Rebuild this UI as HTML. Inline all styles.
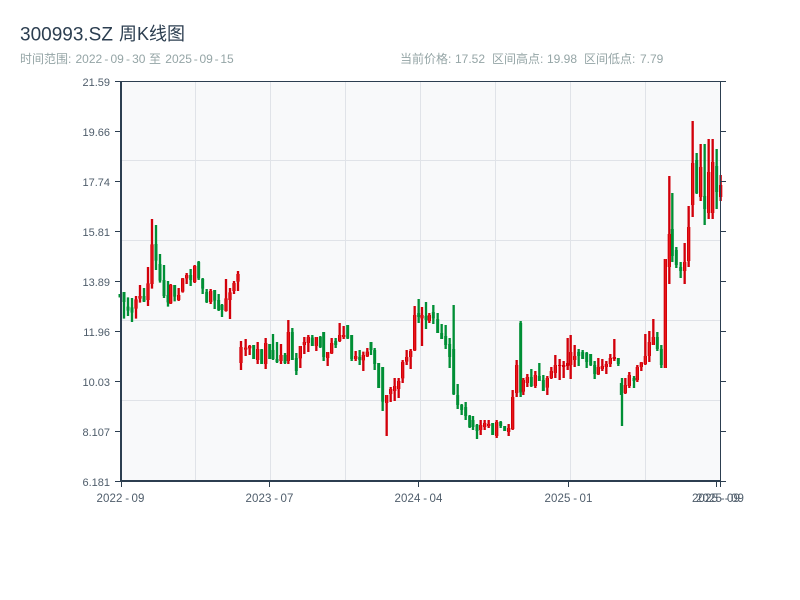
<!DOCTYPE html>
<html><head><meta charset="utf-8">
<style>
html,body{margin:0;padding:0;background:#fff;width:800px;height:600px;overflow:hidden}
svg{position:absolute;left:0;top:0}
text{font-family:"Liberation Sans","Noto Sans CJK SC",sans-serif}
.y{font-size:11px;fill:#4f5d6b;text-anchor:end}
.x{font-size:11.500px;fill:#4f5d6b}
.gw{fill:none;stroke:#008f35;stroke-width:7}
.gb{fill:none;stroke:#008f35;stroke-width:9}
.rw{fill:none;stroke:#d2000a;stroke-width:7}
.rb{fill:none;stroke:#d2000a;stroke-width:10}
.ri{fill:none;stroke:#ec1c1c;stroke-width:3}
</style></head><body>
<svg width="800" height="600" viewBox="0 0 800 600">
<g fill="#2c3e50"><text x="20" y="40.500" font-size="19">300993.SZ</text><text x="119" y="40" font-size="18">周K线图</text></g>
<g fill="#95a5a6" font-size="12">
<text x="20" y="63">时间范围:</text>
<text x="75.500 82.170 88.840 95.510 104.330 110.500 117.170 126 132.140 138.810" y="63">2022-09-30</text>
<text x="149" y="63">至</text>
<text x="165.300 171.970 178.640 185.310 193.700 199.480 206.150 214.600 220.320 226.990" y="63">2025-09-15</text>
<text x="400" y="63">当前价格:</text>
<text x="455" y="63">17.52</text>
<text x="492" y="63">区间高点:</text>
<text x="547" y="63">19.98</text>
<text x="584" y="63">区间低点:</text>
<text x="640" y="63">7.79</text>
</g>
<rect x="121" y="81" width="599" height="400" fill="#f8f9fa"/>
<path d="M195.500 81V481M270.500 81V481M345.500 81V481M420.500 81V481M495.500 81V481M570.500 81V481M645.500 81V481M121 160.500H720M121 240.500H720M121 320.500H720M121 400.500H720" fill="none" stroke="#e0e3e8" stroke-width="1"/>

<g transform="translate(110 210) scale(.33333)">
<path class="gw" d="M30 252V262M42 246V326M54 262V318M66 264V336M102 234V276M138 45V180M150 132V218M162 165V264M174 213V290M194 225V274M242 177V228M266 153V210M278 204V252M290 237V279M314 240V297M326 252V303M336 282V321"/>
<path class="gb" d="M30 252V262M42 246V276M54 290V302M66 292V308M102 258V275M138 102V152M150 162V212M162 210V258M174 255V277M194 225V260M242 195V210M266 156V205M278 207V236M290 246V276M314 240V272M326 270V300M336 285V300"/>
<path class="rw" d="M78 258V326M90 225V278M114 171V288M126 27V236M182 222V282M206 234V273M218 204V248M230 189V222M254 165V219M302 237V282M348 207V305M360 234V327M372 213V252M384 183V243"/>
<path class="rb" d="M78 268V296M90 258V266M114 220V270M126 103V222M182 225V280M206 255V270M218 205V245M230 195V205M254 168V216M302 243V276M348 265V303M360 247V270M372 219V243M384 192V215"/>
<path class="ri" d="M78 268V296M90 258V266M114 220V270M126 103V222M182 225V280M206 255V270M218 205V245M230 195V205M254 168V216M302 243V276M348 265V303M360 247V270M372 219V243M384 192V215"/>
</g>

<g transform="translate(235 315) scale(.33333)">
<path class="gw" d="M56 90V132M80 102V147M104 87V132M114 57V135M126 81V144M150 114V147M172 39V135M184 114V180M232 60V93M256 63V99M266 51V138M302 69V99M338 30V72M350 60V138M374 105V150"/>
<path class="gb" d="M56 90V132M80 103V147M104 87V132M114 105V132M126 132V141M150 120V144M172 51V135M184 129V168M232 68V93M256 66V96M266 51V126M302 78V90M338 30V70M350 60V132M374 126V135"/>
<path class="rw" d="M18 78V165M32 72V123M44 90V120M68 81V147M92 69V162M138 87V147M160 15V147M196 93V159M208 66V117M220 60V111M244 66V108M278 111V153M290 69V117M314 24V81M326 33V72M362 108V138"/>
<path class="rb" d="M18 96V144M32 98V104M44 93V100M68 102V135M92 84V147M138 120V138M160 51V138M196 93V130M208 81V90M220 66V84M244 66V93M278 111V129M290 84V115M314 60V78M326 60V66M362 123V132"/>
<path class="ri" d="M18 96V144M32 98V104M44 93V100M68 102V135M92 84V147M138 120V138M160 51V138M196 93V130M208 81V90M220 66V84M244 66V93M278 111V129M290 84V115M314 60V78M326 60V66M362 123V132"/>
</g>

<g transform="translate(360 295) scale(.33333)">
<path class="gw" d="M33 141V180M44 159V225M56 204V279M68 216V348M176 12V84M198 21V102M220 30V87M233 54V114M245 87V132M257 90V162M269 129V219M281 30V300M293 267V342M305 327V360M317 321V375M329 360V399M339 363V405M351 387V432"/>
<path class="gb" d="M33 141V165M44 165V207M56 204V279M68 216V320M176 54V66M198 63V75M220 51V70M233 72V114M245 114V132M257 123V150M269 147V186M281 162V297M293 300V330M305 330V345M317 336V363M329 363V396M339 375V396M351 390V408"/>
<path class="rw" d="M10 170V228M22 159V186M80 300V423M92 276V321M104 249V318M116 249V309M128 195V264M140 165V210M152 162V222M164 33V168M186 36V153M208 54V84"/>
<path class="rb" d="M10 180V196M22 170V184M80 300V324M92 282V297M104 273V288M116 258V282M128 201V250M140 186V200M152 168V186M164 60V166M186 60V70M208 60V78"/>
<path class="ri" d="M10 180V196M22 170V184M80 300V324M92 282V297M104 273V288M116 258V282M128 201V250M140 186V200M152 168V186M164 60V166M186 60V70M208 60V78"/>
</g>

<g transform="translate(470 315) scale(.33333)">
<path class="gw" d="M68 324V360M92 318V339M104 333V348M152 18V246M184 162V216M208 144V198M220 180V228M326 102V153M338 105V132M350 111V159M362 117V153M374 138V192M445 129V153"/>
<path class="gb" d="M68 324V360M92 321V333M104 333V348M152 24V232M184 186V213M208 183V198M220 195V228M326 111V123M338 111V132M350 114V141M362 117V150M374 150V177M445 129V147"/>
<path class="rw" d="M32 315V360M44 315V345M56 315V339M80 315V369M116 327V363M128 225V345M140 135V246M160 189V240M172 177V216M196 168V219M232 183V240M244 156V192M256 120V189M269 132V195M281 138V189M293 69V165M302 60V192M314 90V156M385 129V180M397 132V168M409 138V177M421 117V156M433 72V138"/>
<path class="rb" d="M32 330V345M44 324V336M56 327V333M80 321V363M116 339V351M128 246V342M140 150V234M160 195V230M172 186V204M196 180V213M232 189V218M244 168V189M256 150V174M269 150V153M281 150V156M293 144V153M302 111V150M314 123V135M385 156V178M397 153V162M409 147V156M421 129V147M433 126V132"/>
<path class="ri" d="M32 330V345M44 324V336M56 327V333M80 321V363M116 339V351M128 246V342M140 150V234M160 195V230M172 186V204M196 180V213M232 189V218M244 168V189M256 150V174M302 111V150M314 123V135M385 156V178M397 153V162M409 147V156M421 129V147"/>
</g>

<g transform="translate(610 240) scale(.33333)">
<path class="gw" d="M36 414V558M72 408V444M142 276V333M154 315V384"/>
<path class="gb" d="M34 429V465M72 414V423M142 291V327M154 327V375"/>
<path class="rw" d="M46 414V462M58 396V444M82 375V426M94 366V393M106 282V375M118 273V366M130 237V315M166 57V384"/>
<path class="rb" d="M46 435V459M58 405V438M82 381V420M94 367V381M106 348V372M118 306V348M130 291V315M166 57V384"/>
<path class="ri" d="M46 435V459M58 405V438M82 381V420M94 367V381M106 348V372M118 306V348M130 291V315M166 57V384"/>
</g>

<g transform="scale(.33333)">
<path class="gw" d="M2017 579V786M2029 741V804M2042 786V834M2090 459V582M2114 432V675M2150 447V627"/>
<path class="gb" d="M2017 687V768M2029 750V795M2042 801V813M2090 480V579M2114 588V627M2150 498V576"/>
<path class="rw" d="M2008 528V852M2054 729V852M2066 618V801M2078 363V651M2102 432V603M2126 417V657M2138 417V657M2162 525V603"/>
<path class="rb" d="M2008 702V801M2054 786V813M2066 681V783M2078 489V615M2102 501V591M2126 516V639M2138 486V639M2162 555V591"/>
<path class="ri" d="M2008 702V801M2054 786V813M2066 681V783M2078 489V615M2102 501V591M2126 516V639M2138 486V639M2162 555V591"/>
</g>

<path d="M121 81.500H720.500V481" fill="none" stroke="#2c3e50" stroke-width="1"/>
<path d="M121 81V482M120 481H721" fill="none" stroke="#2c3e50" stroke-width="2"/>
<path d="M115 81.500H121M115 131.500H121M115 181.500H121M115 231.500H121M115 281.500H121M115 331.500H121M115 381.500H121M115 431.500H121M115 481.500H121M720 81.500H726M720 131.500H726M720 181.500H726M720 231.500H726M720 281.500H726M720 331.500H726M720 381.500H726M720 431.500H726M720 481.500H726M121.500 481V487M269.500 481V487M418.500 481V487M568.500 481V487M716.500 481V487M720.500 481V487" fill="none" stroke="#2c3e50" stroke-width="1"/>

<text class="y" x="110" y="86">21.59</text>
<text class="y" x="110" y="136">19.66</text>
<text class="y" x="110" y="186">17.74</text>
<text class="y" x="110" y="236">15.81</text>
<text class="y" x="110" y="286">13.89</text>
<text class="y" x="110" y="336">11.96</text>
<text class="y" x="110" y="386">10.03</text>
<text class="y" x="110" y="436">8.107</text>
<text class="y" x="110" y="486">6.181</text>
<text class="x" x="96.500 103 109.500 116 125.200 131.500 138" y="502">2022-09</text>
<text class="x" x="245.500 252 258.500 265 274.200 280.500 287" y="502">2023-07</text>
<text class="x" x="394.500 401 407.500 414 423.200 429.500 436" y="502">2024-04</text>
<text class="x" x="544.500 551 557.500 564 573.200 579.500 586" y="502">2025-01</text>
<text class="x" x="692 698.500 705 711.500 720.700 727 733.500" y="502">2025-09</text>
<text class="x" x="696 702.500 709 715.500 724.700 731 737.500" y="502">2025-09</text>
</svg>
</body></html>
